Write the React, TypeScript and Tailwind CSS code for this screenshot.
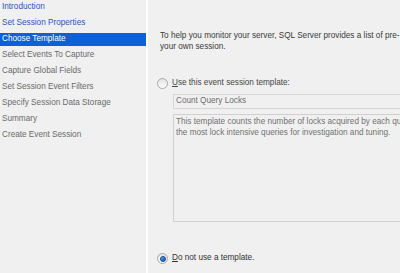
import React from "react";

const steps: { label: string; state: "done" | "active" | "todo" }[] = [
  { label: "Introduction", state: "done" },
  { label: "Set Session Properties", state: "done" },
  { label: "Choose Template", state: "active" },
  { label: "Select Events To Capture", state: "todo" },
  { label: "Capture Global Fields", state: "todo" },
  { label: "Set Session Event Filters", state: "todo" },
  { label: "Specify Session Data Storage", state: "todo" },
  { label: "Summary", state: "todo" },
  { label: "Create Event Session", state: "todo" },
];

function Radio({ checked }: { checked: boolean }) {
  return (
    <div className="relative w-[11px] h-[11px] rounded-full border border-[#a9a9a9] bg-gradient-to-b from-[#e4e4e4] to-[#fbfbfb] shrink-0 flex items-center justify-center">
      {checked && (
        <div className="w-[6px] h-[6px] rounded-full bg-gradient-to-br from-[#5fb3f0] to-[#0b4ea6] border border-[#16428a]" />
      )}
    </div>
  );
}

export default function App() {
  return (
    <div
      className="w-[400px] h-[273px] overflow-hidden flex bg-[#f0f0f0] text-[8.2px]"
      style={{ fontFamily: '"Liberation Sans", Arial, sans-serif' }}
    >
      <div className="w-[146px] shrink-0 bg-[#f0f0f0] flex flex-col mt-[-1px]">
        {steps.map((s) => (
          <div key={s.label} className="h-[16px] flex items-center">
            {s.state === "active" ? (
              <div className="w-full h-[13px] bg-[#0a62d6] text-white flex items-center pl-[2px] whitespace-nowrap">
                {s.label}
              </div>
            ) : (
              <div
                className={
                  "pl-[2px] whitespace-nowrap " +
                  (s.state === "done" ? "text-[#2e55b5]" : "text-[#6a6a6a]")
                }
              >
                {s.label}
              </div>
            )}
          </div>
        ))}
      </div>
      <div className="w-[2px] shrink-0 bg-white" />
      <div className="flex-1 min-w-0 overflow-hidden flex flex-col pt-[31px]">
        <div className="pl-[12px] leading-[10.5px] text-[#3a3a3a] whitespace-nowrap">
          <div>To help you monitor your server, SQL Server provides a list of pre-</div>
          <div>your own session.</div>
        </div>
        <div className="mt-[26px] pl-[9px] flex items-center gap-[4px] h-[11px] text-[#444]">
          <Radio checked={false} />
          <span className="whitespace-nowrap">
            <span className="underline">U</span>se this event session template:
          </span>
        </div>
        <div className="mt-[5px] ml-[25px] w-[300px] h-[15px] border border-[#d5d5d5] bg-[#f0f0f0] flex items-center pl-[2px] text-[#6d6d6d] whitespace-nowrap">
          Count Query Locks
        </div>
        <div className="mt-[5px] ml-[25px] w-[300px] h-[108px] border border-[#d0d0d0] bg-[#f0f0f0] pl-[2px] pt-[2px] leading-[10.5px] text-[#707070] whitespace-nowrap">
          <div>This template counts the number of locks acquired by each query based on the query_hash. You can use this to identify</div>
          <div>the most lock intensive queries for investigation and tuning.</div>
        </div>
        <div className="mt-[31px] pl-[9px] flex items-center gap-[4px] h-[11px] text-[#333]">
          <Radio checked={true} />
          <span className="whitespace-nowrap">
            <span className="underline">D</span>o not use a template.
          </span>
        </div>
      </div>
    </div>
  );
}
